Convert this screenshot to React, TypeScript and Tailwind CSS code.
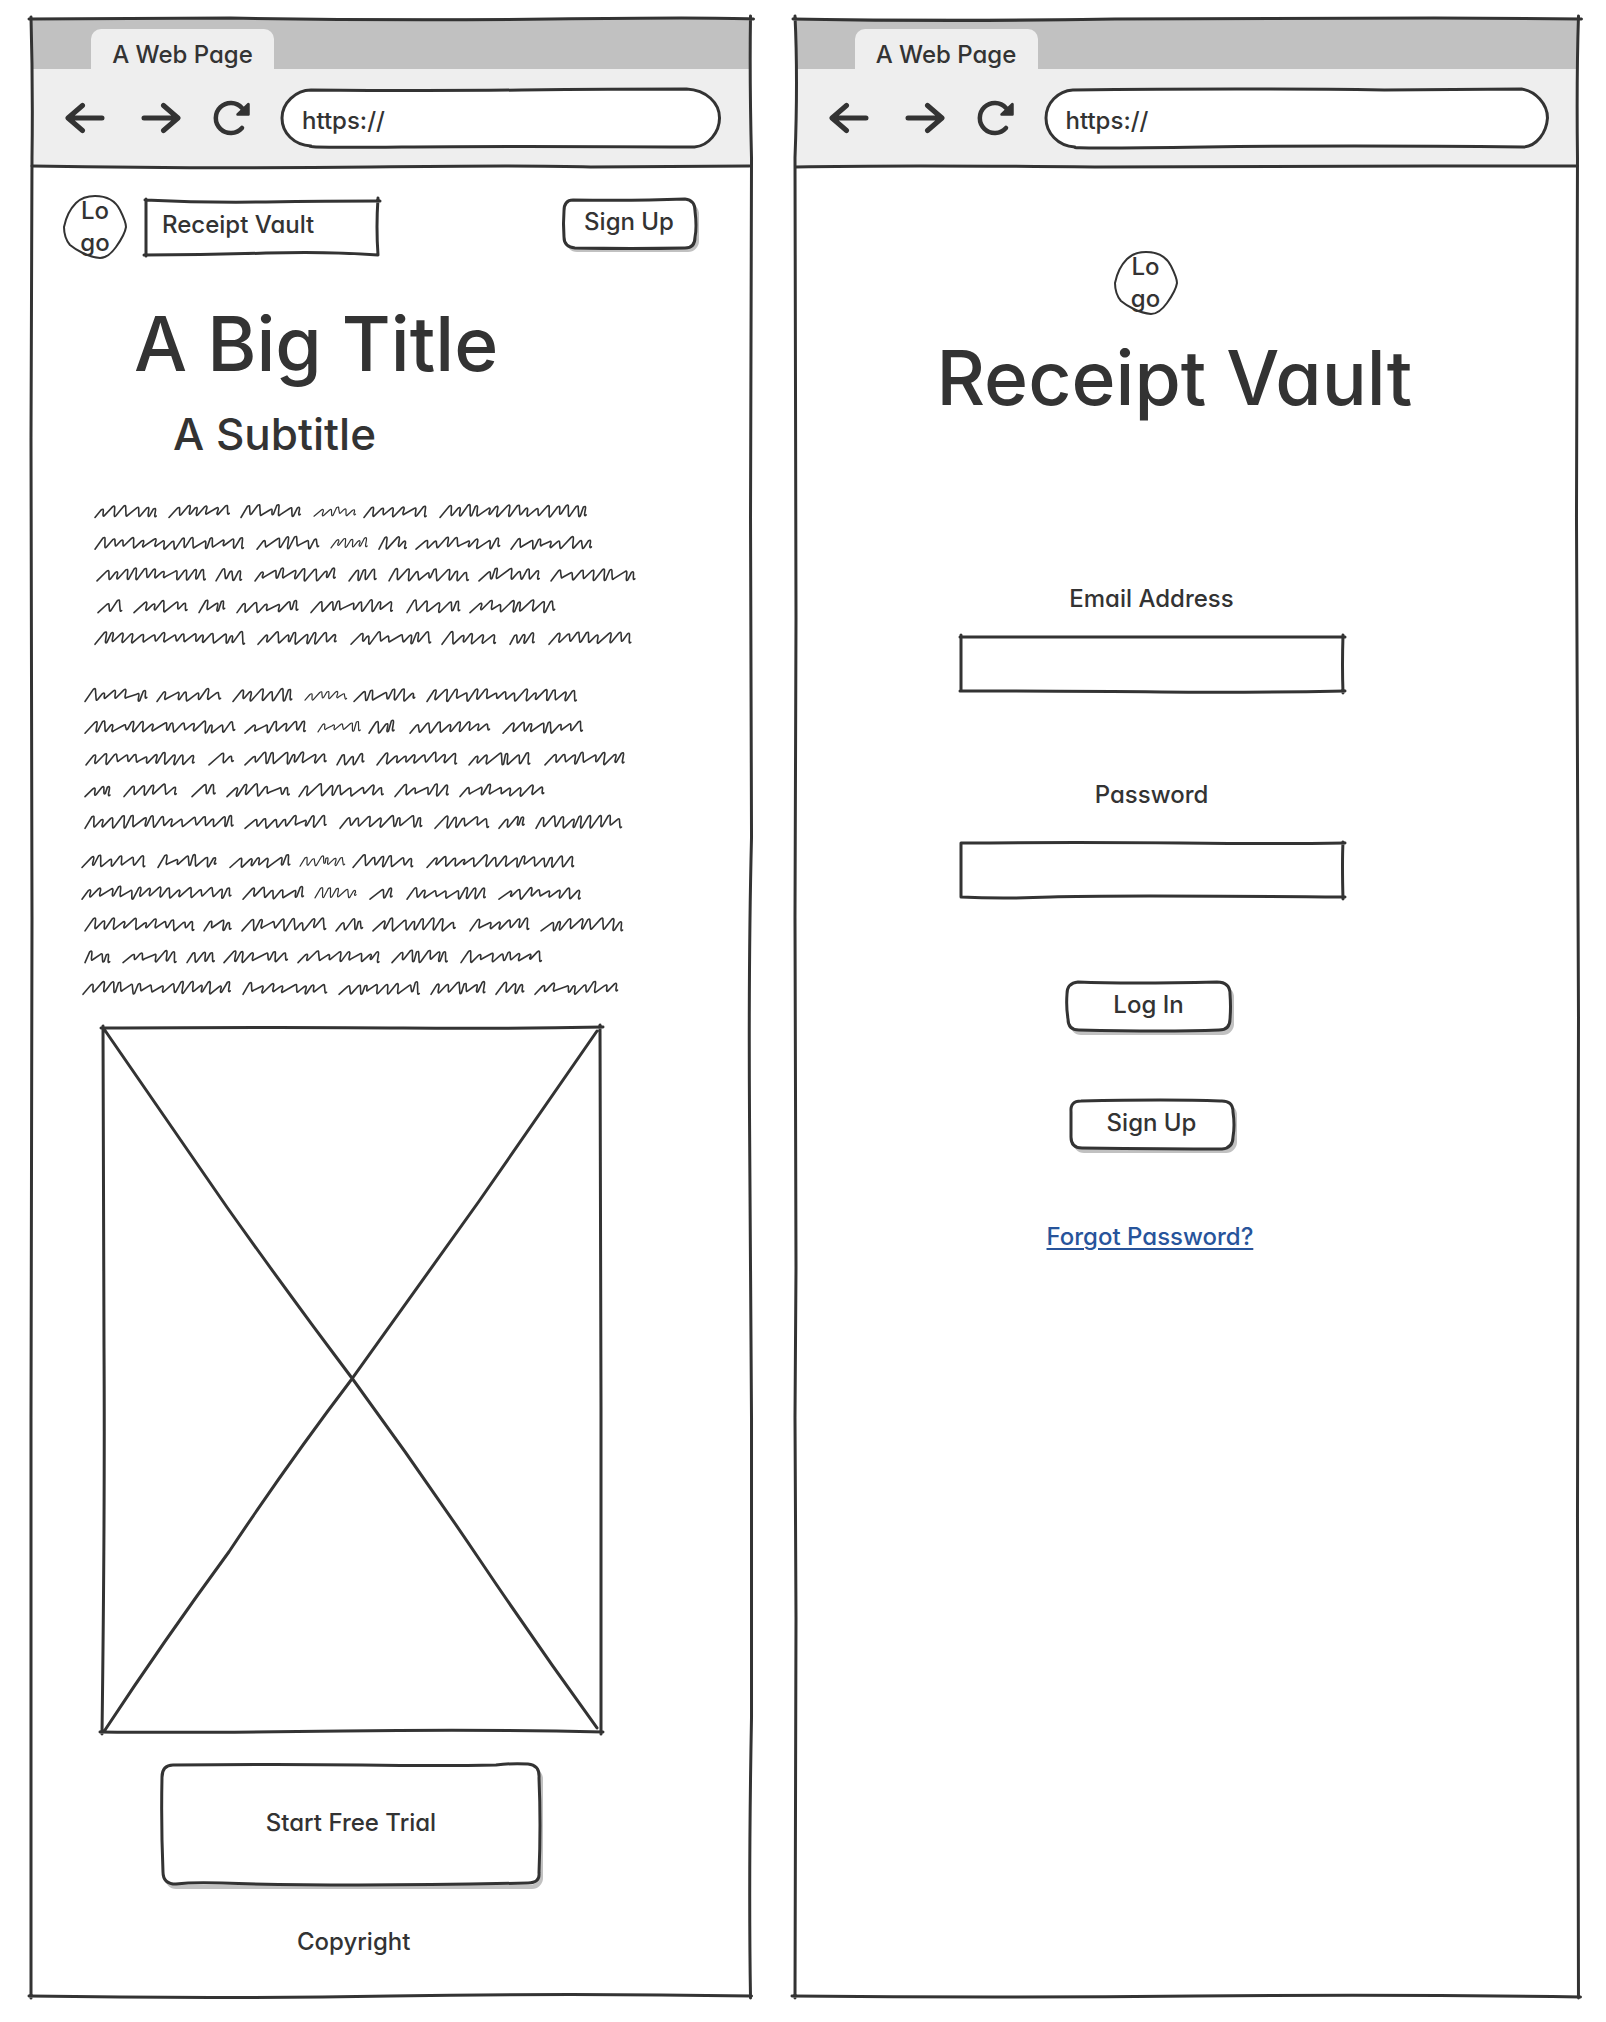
import React from "react";

type Word = [start: number, end: number];

const PARAGRAPHS: Word[][][] = [
  [
    [[25, 87], [99, 159], [171, 231], [244, 286], [294, 357], [370, 517]],
    [[25, 174], [187, 248], [261, 298], [309, 337], [346, 430], [441, 522]],
    [[27, 135], [146, 172], [185, 266], [279, 306], [319, 398], [409, 470], [481, 565]],
    [[28, 51], [64, 117], [129, 155], [167, 228], [241, 323], [337, 390], [400, 484]],
    [[25, 174], [188, 267], [281, 360], [372, 426], [440, 465], [479, 561]],
  ],
  [
    [[15, 77], [87, 150], [163, 222], [235, 276], [284, 345], [357, 506]],
    [[15, 164], [175, 236], [248, 290], [299, 325], [340, 419], [433, 512]],
    [[16, 125], [139, 163], [175, 256], [267, 294], [307, 387], [399, 460], [475, 555]],
    [[15, 41], [54, 107], [122, 145], [157, 219], [229, 313], [325, 379], [390, 474]],
    [[15, 163], [175, 256], [270, 352], [365, 418], [429, 455], [466, 551]],
  ],
  [
    [[12, 75], [88, 147], [160, 220], [230, 274], [283, 343], [357, 504]],
    [[12, 161], [173, 234], [245, 287], [300, 323], [337, 416], [429, 511]],
    [[15, 124], [134, 161], [172, 255], [266, 292], [303, 385], [400, 459], [471, 553]],
    [[15, 40], [53, 106], [117, 144], [154, 217], [228, 310], [322, 377], [391, 471]],
    [[13, 161], [173, 256], [269, 349], [361, 416], [426, 454], [465, 548]],
  ],
];

/** One scribbled word: slanted up-strokes, near-vertical down-strokes, uneven peaks. */
function scribble([start, end]: Word, mid: number, seed: number, small: boolean) {
  let s = (seed * 7919 + 101) % 2147483647;
  const rnd = () => (s = (s * 48271) % 2147483647) / 2147483647;
  rnd();
  rnd();
  const strokes = Math.max(2, Math.round((end - start) / (small ? 8 : 10)));
  const step = (end - start) / strokes;
  const amp = small ? 0.8 : 1;
  const f = (n: number) => n.toFixed(1);
  let d = `M${start} ${f(mid + 6.5 * amp)}`;
  for (let i = 0; i < strokes; i++) {
    const last = i === strokes - 1;
    const px = last ? end - 1.5 : start + step * (i + 1 + (rnd() - 0.5) * 0.45);
    const py = mid - (1.5 + rnd() * 5) * amp;
    const tx = px - 1.2 + rnd() * 1.8;
    const ty = mid + (3 + rnd() * 3.5) * amp;
    d += `L${f(px - 2.2)} ${f(py + 0.8)}Q${f(px + 0.4)} ${f(py - 1.2)} ${f(px)} ${f(py + 2)}L${f(tx)} ${f(ty - 1.5)}Q${f(tx)} ${f(ty + 1)} ${f(tx + 1.6)} ${f(ty - 0.8)}`;
  }
  return d;
}

function Scribbles({ lines, seed }: { lines: Word[][]; seed: number }) {
  return (
    <svg aria-hidden="true" width="580" height="148" viewBox="0 0 580 148" fill="none" stroke="#333" strokeLinecap="round" strokeLinejoin="round" className="block shrink-0 overflow-visible">
      {lines.map((words, l) =>
        words.map((w, i) => {
          const small = (l === 0 && i === 3) || (l === 1 && i === 2);
          return (
            <path key={`${l}-${i}`} strokeWidth={small ? 1.2 : 1.6} d={scribble(w, 11 + l * 31.7, seed + l * 13 + i * 5, small)} />
          );
        }),
      )}
    </svg>
  );
}

/** Hand-drawn outline stretched over its parent. */
function Outline({ w, h, d, width = 3 }: { w: number; h: number; d: string; width?: number }) {
  return (
    <svg aria-hidden="true" viewBox={`0 0 ${w} ${h}`} preserveAspectRatio="none" fill="none" stroke="#333" strokeWidth={width} strokeLinecap="round" strokeLinejoin="round" className="pointer-events-none absolute inset-0 h-full w-full overflow-visible">
      <path d={d} vectorEffect="non-scaling-stroke" />
    </svg>
  );
}

function Browser({ grow, frame, rule, pill, id, children }: { grow: string; frame: { w: number; d: string }; rule: string; pill: { w: number; d: string }; id: string; children: React.ReactNode }) {
  return (
    <section className={`relative flex min-w-0 flex-col ${grow}`}>
      <header className="relative">
        <div className="flex h-[51px] items-end bg-[#c1c1c1] pl-[60px]">
          <div className="flex h-[40px] w-[183px] items-center justify-center rounded-t-[10px] bg-[#eee] pt-3 whitespace-nowrap">A Web Page</div>
        </div>
        <div className="flex h-[98px] items-center bg-[#eee] pr-[31px] pl-[34px]">
          <button aria-label="Back" className="shrink-0">
            <svg width="41" height="32" viewBox="0 0 41 32" fill="none" stroke="#333" strokeWidth="5" strokeLinecap="round" strokeLinejoin="round"><path d="M37 16H4M17.500 3.500L3 16L17.500 28.500" /><path d="M7 13V19" strokeWidth="3" /></svg>
          </button>
          <button aria-label="Forward" className="ml-[35px] shrink-0">
            <svg width="41" height="32" viewBox="0 0 41 32" fill="none" stroke="#333" strokeWidth="5" strokeLinecap="round" strokeLinejoin="round"><path d="M3 16H36M22.500 3.500L37 16L22.500 28.500" /><path d="M33 13V19" strokeWidth="3" /></svg>
          </button>
          <button aria-label="Reload" className="ml-[31px] shrink-0">
            <svg width="38" height="36" viewBox="0 0 38 36" fill="none" stroke="#333" strokeWidth="4.500" strokeLinecap="round" strokeLinejoin="round">
              <path d="M29 28A15 15 0 1 1 29 8" />
              <path d="M35.500 4V14.500H24.500Z" fill="#333" strokeWidth="2.500" />
            </svg>
          </button>
          <div className="relative ml-[31px] h-[58px] min-w-0 flex-1 rounded-full bg-white">
            <Outline w={pill.w} h={58} d={pill.d} />
            <input id={id} aria-label="Address" defaultValue="https://" className="relative h-full w-full bg-transparent px-[20px] pt-1 outline-none" />
          </div>
        </div>
        <Outline w={frame.w} h={149} d={rule} />
      </header>
      {children}
      <Outline w={frame.w} h={1980} d={frame.d} />
    </section>
  );
}

function Logo({ className = "" }: { className?: string }) {
  return (
    <div className={`relative flex h-[62px] w-[62px] shrink-0 items-center justify-center text-center leading-8 ${className}`}>
      <Outline w={62} h={62} width={2} d="M31 0C44 0 52 6 56 14C60 22 62 27 62 31C61 38 57 44 52 51C47 58 42 62 36 62C24 61 12 54 6 49C1 43 0 37 0 31C2 21 5 14 12 7C18 1 24 0 31 0Z" />
      <span>Lo<br />go</span>
    </div>
  );
}

function SketchButton({ className, w, h, d, children }: { className: string; w: number; h: number; d: string; children: React.ReactNode }) {
  return (
    <button className={`relative flex items-center justify-center rounded-[11px] bg-white font-medium whitespace-nowrap shadow-[3px_4px_0_#c1c1c1] ${className}`}>
      <Outline w={w} h={h} d={d} />
      <span className="relative pb-1">{children}</span>
    </button>
  );
}

function Field({ id, label, type, d, className }: { id: string; label: string; type: string; d: string; className: string }) {
  return (
    <div className={`flex flex-col items-center ${className}`}>
      <label htmlFor={id} className="leading-8">{label}</label>
      <div className="relative h-[55px] w-full">
        <Outline w={382} h={55} d={d} />
        <input id={id} type={type} className="relative h-full w-full bg-transparent px-4 outline-none" />
      </div>
    </div>
  );
}

export default function App() {
  return (
    <main className="flex gap-[44px] bg-white pt-[18px] pr-[28px] pb-[24px] pl-[31px] font-['Inter',sans-serif] text-[24px] font-medium text-[#333] [font-feature-settings:'cv11']">
      <Browser
        id="url-home"
        grow="flex-[720]"
        frame={{ w: 720, d: "M-2 1L200 0Q360 3 520 1T723 1M0 -1Q2 70 1 140L0 420L1 900L0 1400V1981M720 -2Q719 60 721 140L720 500L721 820Q718 940 719 1100L721 1400V1700Q718 1860 720 1981M-2 1979Q180 1982 360 1979T721 1979" }}
        rule="M1 148Q180 151 340 149T560 149L719 148"
        pill={{ w: 438, d: "M29 1Q150 2 240 1T405 0C425 1 438 14 438 29C438 43 427 57 413 58Q220 57 120 58T29 57C12 56 0 44 0 29C0 14 14 1 29 1Z" }}
      >
        <div className="flex items-start pt-[29px] pr-[55px] pl-[33px]">
          <Logo />
          <div className="relative ml-[20px] flex h-[55px] w-[232px] items-center self-center pb-1 pl-[16px] whitespace-nowrap">
            <Outline w={232} h={56} d="M-1 0Q60 3 120 2T234 1M0 -1V57M232 -2Q230 28 232 56M-2 56Q60 56 120 54T232 56" />
            Receipt Vault
          </div>
          <SketchButton className="mt-[3px] ml-auto h-[49px] w-[133px]" w={133} h={49} d="M10 1Q70 2 122 0Q132 1 132 12Q134 28 132 38Q132 49 122 49Q70 50 12 49Q1 48 1 38Q0 24 1 12Q1 1 10 1Z">Sign Up</SketchButton>
        </div>
        <h1 className="mt-[42px] pl-[103px] text-[75px] leading-[88px] font-medium whitespace-nowrap">A Big Title</h1>
        <h2 className="mt-[18px] pl-[142px] text-[44px] leading-[56px] font-medium whitespace-nowrap">A Subtitle</h2>
        <div className="mt-[38px] flex flex-col gap-[36px] pl-[39px]">
          <Scribbles lines={PARAGRAPHS[0]} seed={3} />
          <Scribbles lines={PARAGRAPHS[1]} seed={88} />
        </div>
        <div className="mt-[18px] pl-[39px]">
          <Scribbles lines={PARAGRAPHS[2]} seed={171} />
        </div>
        <div className="relative mt-[29px] ml-[72px] h-[705px] w-[498px]" role="img" aria-label="Image placeholder">
          <Outline w={498} h={704} d="M-2 1Q200 0 300 1T500 0M0 -1Q0 160 1 320T-1 706M497 -2L498 380V706M-3 704Q100 705 240 703T500 704M1 2L124 180Q188 270 250 352Q316 442 378 534Q436 620 494 700M494 4L376 174L250 350Q186 434 126 524Q60 614 2 702" />
        </div>
        <SketchButton className="mt-[32px] ml-[131px] h-[121px] w-[378px]" w={378} h={120} d="M11 1Q120 0 200 1T334 1Q350 -1 366 0Q378 1 377 14Q379 60 377 108Q378 118 366 118Q180 122 60 118Q30 117 14 119Q1 119 1 107Q-1 60 0 13Q0 1 11 1Z">Start Free Trial</SketchButton>
        <p className="mt-[41px] mb-[39px] pl-[266px] leading-8">Copyright</p>
      </Browser>

      <Browser
        id="url-login"
        grow="flex-[784]"
        frame={{ w: 784, d: "M-2 1Q160 4 320 1L640 0L787 1M0 -2Q3 60 0 140L1 600L0 900L1 1250L0 1400L1 1600L0 1981M784 -2Q782 60 783 140L782 500L784 1000L783 1500L784 1981M-3 1979Q200 1981 400 1979T786 1980" }}
        rule="M1 149Q100 147 300 149L640 148L783 148"
        pill={{ w: 504, d: "M27 1Q200 -1 340 1L478 0C492 2 504 15 504 29C503 44 493 57 480 58Q300 56 160 58T29 58C12 57 0 44 0 29C0 14 12 2 27 1Z" }}
      >
        <div className="flex flex-col items-start">
          <Logo className="mt-[85px] ml-[320px]" />
          <h1 className="mt-[20px] pl-[142px] text-[75px] leading-[88px] font-medium whitespace-nowrap">Receipt Vault</h1>
          <form className="flex w-[548px] max-w-full flex-col pl-[166px]" onSubmit={(e) => e.preventDefault()}>
            <Field className="mt-[161px] gap-[21px]" id="email" label="Email Address" type="email" d="M-1 1Q150 1 250 1T384 1M0 -1V55M382 -1Q381 30 382 57M-1 55Q120 55 200 56T384 55" />
            <Field className="mt-[88px] gap-[31px]" id="password" label="Password" type="password" d="M0 1Q120 0 220 1T384 1M0 1Q0 30 0 55M382 0Q381 20 382 57M0 55Q40 57 90 55T384 55" />
            <SketchButton className="mt-[85px] ml-[106px] h-[49px] w-[164px]" w={164} h={49} d="M11 0Q60 2 150 0Q163 0 163 12Q164 25 163 37Q163 48 152 48Q100 50 12 48Q1 48 1 37Q-1 25 0 12Q0 1 11 0Z">Log In</SketchButton>
            <SketchButton className="mt-[69px] ml-[109px] h-[49px] w-[164px]" w={164} h={49} d="M11 1Q100 -1 150 1Q163 0 163 12Q165 25 163 37Q163 48 152 49Q100 49 12 48Q1 48 1 37V12Q0 1 11 1Z">Sign Up</SketchButton>
            <a href="#forgot" className="mt-[72px] ml-[86px] leading-8 whitespace-nowrap text-[#27549b] underline decoration-2 underline-offset-[3px]">Forgot Password?</a>
          </form>
        </div>
      </Browser>
    </main>
  );
}
